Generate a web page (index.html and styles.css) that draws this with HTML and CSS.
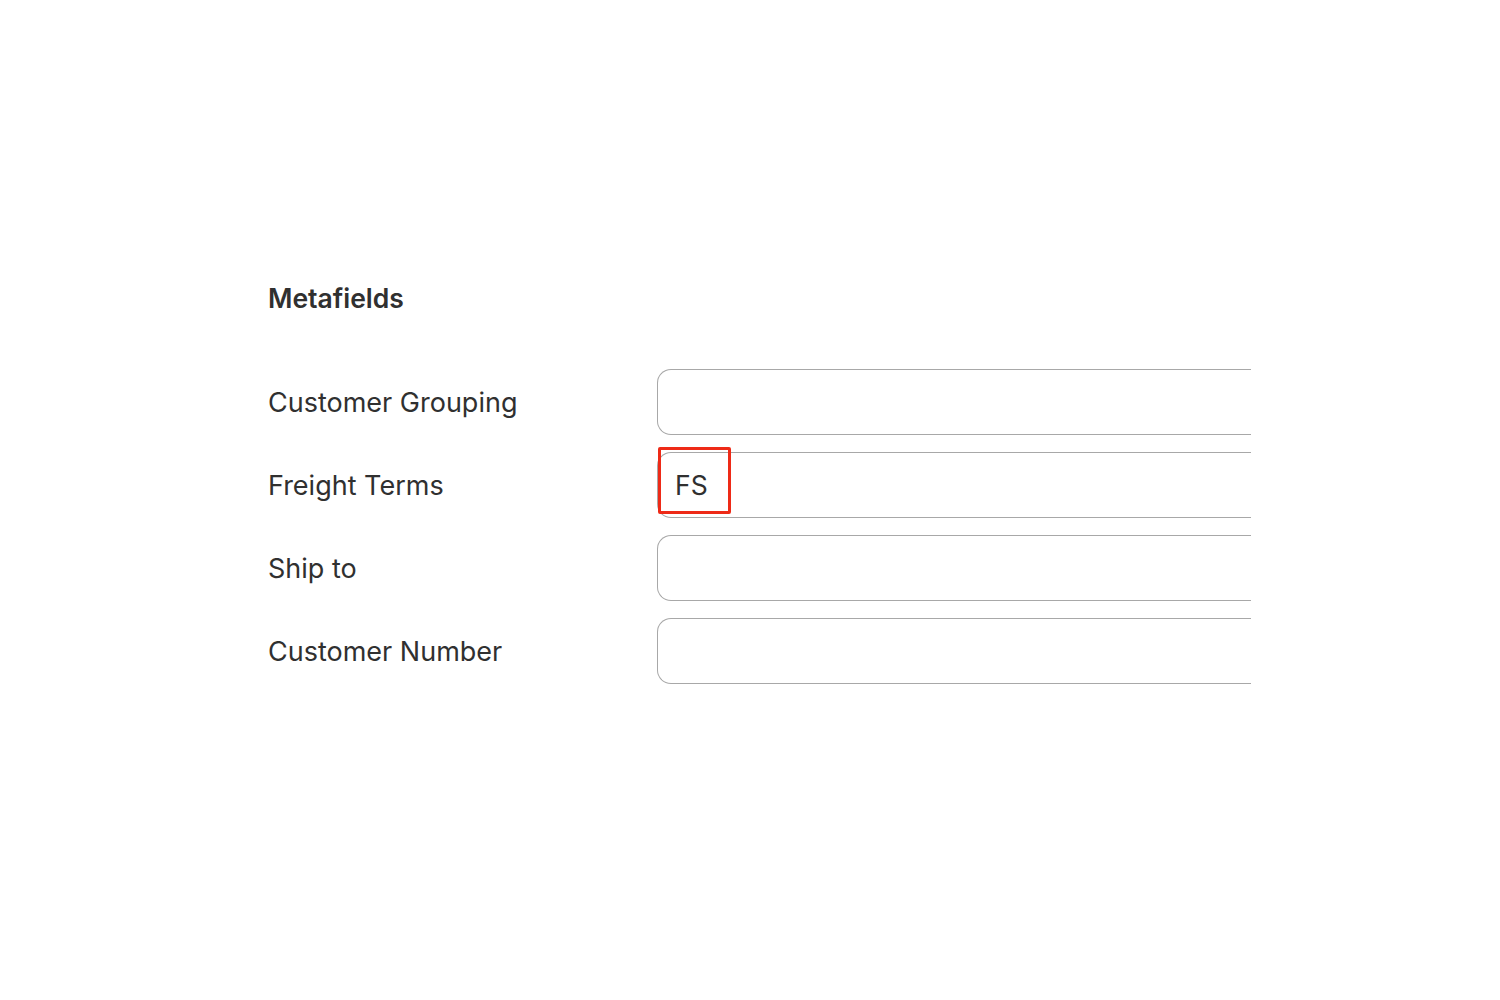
FILE: index.html
```html
<!DOCTYPE html>
<html lang="en">
<head>
    <meta charset="UTF-8">
    <meta name="viewport" content="width=device-width, initial-scale=1.0">
    <title>Metafields</title>
    <link rel="stylesheet" href="styles.css">
</head>
<body>

    <section class="metafields">
        <h2>Metafields</h2>

        <div class="field-list">
            <div class="field-row">
                <label for="grouping">Customer Grouping</label>
                <input type="text" id="grouping">
            </div>
            <div class="field-row">
                <label for="freight">Freight Terms</label>
                <div class="input-wrap">
                    <input type="text" id="freight" value="FS">
                    <span class="highlight"></span>
                </div>
            </div>
            <div class="field-row">
                <label for="shipto">Ship to</label>
                <input type="text" id="shipto">
            </div>
            <div class="field-row">
                <label for="custnum">Customer Number</label>
                <input type="text" id="custnum">
            </div>
        </div>
    </section>

</body>
</html>
```

FILE: styles.css
```css
body {
    font-family: Inter, "Noto Sans", Arial, sans-serif;
    background-color: #ffffff;
    color: #303030;
    margin: 0;
    padding: 0;
}

.metafields {
    padding: 283px 0 0 268px;
    width: 983px;
}

.metafields h2 {
    margin: 0 0 56px;
    font-size: 26.5px;
    line-height: 30px;
    font-weight: 600;
    color: #303030;
}

.field-list {
    display: flex;
    flex-direction: column;
    gap: 17px;
}

.field-row {
    display: grid;
    grid-template-columns: 389px 1fr;
    align-items: center;
}

.field-row label {
    font-size: 27px;
    color: #303030;
}

.field-row input {
    box-sizing: border-box;
    width: 100%;
    height: 66px;
    padding: 0 17px;
    border: 1.5px solid #a8a8a8;
    border-right: none;
    border-radius: 14px 0 0 14px;
    font-family: inherit;
    font-size: 26.5px;
    color: #303030;
    background: #fff;
    outline: none;
}

.input-wrap {
    position: relative;
}

.highlight {
    position: absolute;
    left: 1px;
    top: -5px;
    width: 67px;
    height: 61px;
    border: 3px solid #ee2a17;
    border-radius: 2px;
    pointer-events: none;
}
```
